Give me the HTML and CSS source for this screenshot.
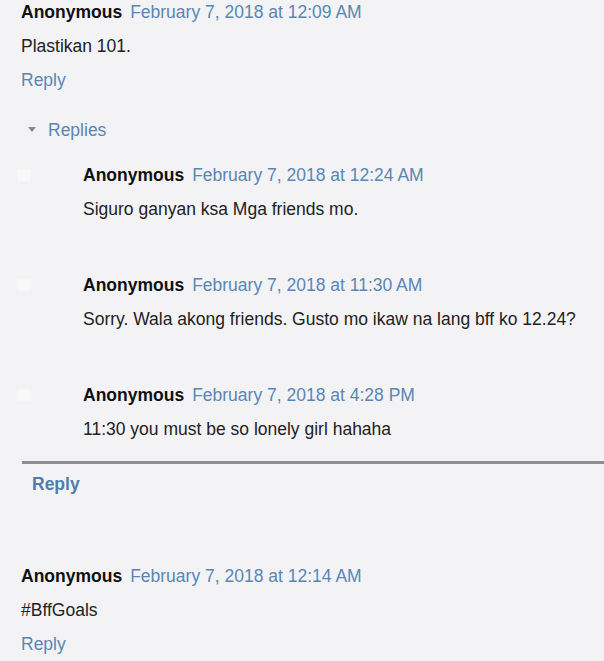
FILE: index.html
```html
<!DOCTYPE html>
<html lang="en">

<head>
    <meta charset="UTF-8">
    <meta name="viewport" content="width=device-width, initial-scale=1.0">
    <title>Comments</title>
    <link rel="stylesheet" href="styles.css">
</head>

<body>
    <div class="comments">
        <div class="comment">
            <div class="comment-head">
                <span class="user">Anonymous</span>
                <a class="date" href="#">February 7, 2018 at 12:09 AM</a>
            </div>
            <p class="comment-body">Plastikan 101.</p>
            <div class="comment-actions"><a href="#">Reply</a></div>

            <div class="replies-toggle">
                <span class="caret"></span>
                <a href="#">Replies</a>
            </div>

            <div class="thread">
                <div class="reply-item">
                    <span class="avatar"></span>
                    <div>
                        <div class="comment-head">
                            <span class="user">Anonymous</span>
                            <a class="date" href="#">February 7, 2018 at 12:24 AM</a>
                        </div>
                        <p class="comment-body">Siguro ganyan ksa Mga friends mo.</p>
                    </div>
                </div>
                <div class="reply-item">
                    <span class="avatar"></span>
                    <div>
                        <div class="comment-head">
                            <span class="user">Anonymous</span>
                            <a class="date" href="#">February 7, 2018 at 11:30 AM</a>
                        </div>
                        <p class="comment-body">Sorry. Wala akong friends. Gusto mo ikaw na lang bff ko 12.24?</p>
                    </div>
                </div>
                <div class="reply-item">
                    <span class="avatar"></span>
                    <div>
                        <div class="comment-head">
                            <span class="user">Anonymous</span>
                            <a class="date" href="#">February 7, 2018 at 4:28 PM</a>
                        </div>
                        <p class="comment-body">11:30 you must be so lonely girl hahaha</p>
                    </div>
                </div>
            </div>
            <div class="thread-reply"><a href="#">Reply</a></div>
        </div>

        <div class="comment">
            <div class="comment-head">
                <span class="user">Anonymous</span>
                <a class="date" href="#">February 7, 2018 at 12:14 AM</a>
            </div>
            <p class="comment-body">#BffGoals</p>
            <div class="comment-actions"><a href="#">Reply</a></div>
        </div>
    </div>
</body>

</html>
```

FILE: styles.css
```css
/* Basic reset */
* {
    margin: 0;
    padding: 0;
    box-sizing: border-box;
}

body {
    font-family: "Liberation Sans", Arial, sans-serif;
    font-size: 17.5px;
    line-height: 24px;
    background-color: #f3f3f5;
    color: #222;
    padding-left: 21px;
    overflow: hidden;
}

a {
    color: #5a86b4;
    text-decoration: none;
}

.comment + .comment {
    margin-top: 68px;
}

.comment-head {
    display: flex;
    gap: 8px;
    white-space: nowrap;
}

.user {
    font-weight: bold;
    color: #111;
}

.comment-body {
    margin-top: 10px;
}

.comment-actions {
    margin-top: 10px;
}

.replies-toggle {
    display: flex;
    align-items: center;
    margin-top: 26px;
    padding-left: 7px;
}

.caret {
    width: 0;
    height: 0;
    border-left: 4px solid transparent;
    border-right: 4px solid transparent;
    border-top: 5px solid #888;
    margin-right: 12px;
    margin-top: -2px;
}

.thread {
    margin-left: 1px;
    margin-top: 21px;
    padding-bottom: 20px;
    border-bottom: 3px solid #8f8f91;
    display: flex;
    flex-direction: column;
    gap: 52px;
}

.reply-item {
    display: grid;
    grid-template-columns: 61px 1fr;
}

.avatar {
    width: 14px;
    height: 12px;
    margin: 6px 0 0 -5px;
    background-color: #f8f8f9;
    border-radius: 3px;
}

.thread-reply {
    margin-top: 8px;
    padding-left: 11px;
}

.thread-reply a {
    font-weight: bold;
    color: #4f7eab;
}
```
